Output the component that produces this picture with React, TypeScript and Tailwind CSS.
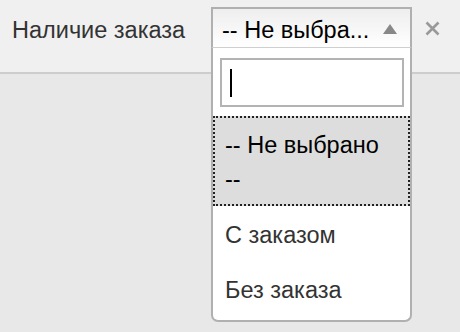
import { useState } from "react";

// keep the double dashes from splitting across lines
const options = ["-\u2060- Не выбрано -\u2060-", "С заказом", "Без заказа"];

export default function App() {
  const [selected] = useState(0);

  return (
    <div className="min-h-[332px] w-[460px] bg-[#e8e8e8] font-['Liberation_Sans',Arial,sans-serif] text-[23.5px]">
      {/* filter bar */}
      <div className="flex h-[74px] items-start border-b-2 border-[#cdcdcd] bg-[#f0f0f0] pt-[7px]">
        <label className="w-[211px] flex-none pl-[12px] pt-[6px] leading-[34px] text-[#333]">
          Наличие заказа
        </label>

        <div className="relative w-[201px] flex-none">
          <div className="flex h-[41px] items-start border-x-2 border-t-2 border-b border-[#b0b0b0] border-b-[#cfcfcf] bg-gradient-to-b from-[#eeeeee] to-white pl-[9px] pt-[4px]">
            <span className="flex-1 whitespace-nowrap leading-[34px] text-black">-- Не выбра...</span>
            <svg width="14" height="10" viewBox="0 0 14 10" className="mr-[13px] mt-[11px] flex-none">
              <polygon points="0,10 14,10 7,0" fill="#888" />
            </svg>
          </div>

          {/* open dropdown */}
          <div className="absolute left-0 top-[41px] z-10 flex h-[274px] w-[201px] flex-col rounded-b-[7px] border-x-2 border-b-2 border-[#b0b0b0] bg-white">
            <div className="pl-[7px] pr-[6px] pt-[10px]">
              <div className="flex h-[49px] items-center border-2 border-[#b3b3b3] bg-white pl-[8px]">
                <div className="h-[28px] w-[2px] bg-black" />
              </div>
            </div>
            <ul className="mt-[9px]">
              {options.map((o, i) =>
                i === selected ? (
                  <li
                    key={o}
                    className="border-2 border-dotted border-[#222] bg-[#dddddd] pb-[8px] pl-[10px] pr-[10px] pt-[10px] leading-[34px] text-black"
                  >
                    {o}
                  </li>
                ) : (
                  <li key={o} className="pb-[9px] pl-[12px] pt-[12px] leading-[34px] text-[#333]">
                    {o}
                  </li>
                )
              )}
            </ul>
          </div>
        </div>

        <svg width="15" height="15" viewBox="0 0 15 15" className="ml-[13px] mt-[14px] flex-none">
          <path d="M1.5 1.5 L13.5 13.5 M13.5 1.5 L1.5 13.5" stroke="#999" strokeWidth="2.6" />
        </svg>
      </div>
    </div>
  );
}
